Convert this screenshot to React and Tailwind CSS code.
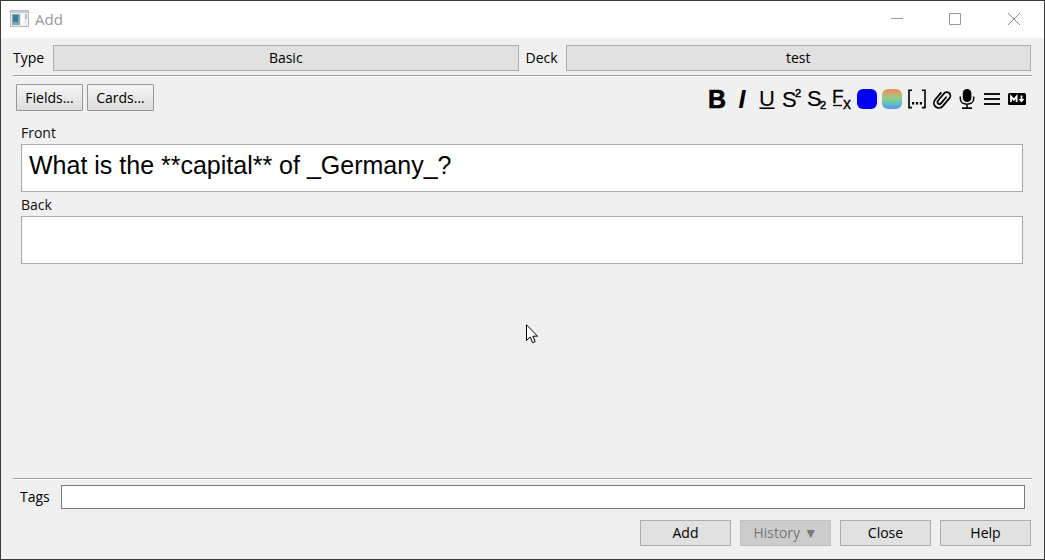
import React from "react";

const ui = 'font-["Open_Sans","Noto_Sans",sans-serif]';
const pushButton =
  "h-[26px] border border-[#adadad] bg-[#e1e1e1] text-center text-sm leading-5 tracking-normal text-black";
const editorButton =
  "h-[27px] w-[67px] rounded-[1px] border border-[#979797] bg-linear-to-b from-[#f5f5f5] to-[#dedede] text-sm leading-5 text-black";

function Tool({ label, children }) {
  return (
    <button type="button" aria-label={label} title={label} className="size-5 flex-none">
      <svg viewBox="0 0 20 20" className="block size-5 overflow-visible" aria-hidden="true">
        {children}
      </svg>
    </button>
  );
}

function Glyph({ className, ...props }) {
  return <text fill="#000" className={`font-["Liberation_Sans",sans-serif] ${className}`} {...props} />;
}

function Toolbar() {
  return (
    <div className="flex items-center gap-[5px] pt-0.5">
      <Tool label="Bold">
        <Glyph x="10" y="19" textAnchor="middle" stroke="#000" strokeWidth="0.6" className="text-[25px] font-bold">B</Glyph>
      </Tool>
      <Tool label="Italic">
        <Glyph x="10" y="19" textAnchor="middle" className="text-[25px] font-bold italic">I</Glyph>
      </Tool>
      <Tool label="Underline">
        <Glyph x="10" y="17" textAnchor="middle" className="text-[22px]">U</Glyph>
        <path d="M2.5 19.2h15" stroke="#000" strokeWidth="1.6" />
      </Tool>
      <Tool label="Superscript">
        <Glyph x="0" y="18" stroke="#000" strokeWidth="0.2" className="text-[22px]">S</Glyph>
        <Glyph x="13" y="8" stroke="#000" strokeWidth="0.5" className="text-[11px]">2</Glyph>
      </Tool>
      <Tool label="Subscript">
        <Glyph x="0" y="17" stroke="#000" strokeWidth="0.2" className="text-[22px]">S</Glyph>
        <Glyph x="13" y="20" stroke="#000" strokeWidth="0.5" className="text-[11px]">2</Glyph>
      </Tool>
      <Tool label="Remove formatting">
        <Glyph x="0" y="14" stroke="#000" strokeWidth="0.3" className="text-[19px]">F</Glyph>
        <path d="M1 16.500h9" stroke="#000" strokeWidth="1.3" />
        <Glyph x="11" y="20" stroke="#000" strokeWidth="0.3" className="text-[16px]">x</Glyph>
      </Tool>
      <button type="button" aria-label="Text colour" className="size-5 flex-none rounded-md bg-[#0000f5]" />
      <button
        type="button"
        aria-label="Change colour"
        className="size-5 flex-none rounded-md bg-linear-to-b from-[#e09562] from-10% via-[#80d38a] via-50% to-[#5b95ee]"
      />
      <Tool label="Cloze deletion">
        <path d="M5 1.2H2v17.4h3M15 1.2h3v17.4h-3" fill="none" stroke="#000" strokeWidth="1.6" />
        <path d="M5 13h2.200v2.600H5zM8.900 13h2.200v2.600H8.900zM12.800 13H15v2.600h-2.200z" />
      </Tool>
      <Tool label="Attach file">
        <path
          d="M12 6v8a2 2 0 0 1-4 0V4.500a3.600 3.600 0 0 1 7.200 0V15a5 5 0 0 1-10 0V6"
          transform="rotate(40 10 10)"
          fill="none"
          stroke="#000"
          strokeWidth="1.800"
          strokeLinecap="round"
        />
      </Tool>
      <Tool label="Record audio">
        <rect x="5.800" y="0" width="8.600" height="13" rx="4.300" />
        <path d="M3.300 7.500v2.300c0 7.200 13.400 7.200 13.400 0V7.500M10 15v4" fill="none" stroke="#000" strokeWidth="1.500" />
        <path d="M5 18.300h10v1.700H5z" />
      </Tool>
      <Tool label="More options">
        <path d="M2 5h16M2 10h16M2 15h16" stroke="#1c1414" strokeWidth="1.900" />
      </Tool>
      <Tool label="Markdown">
        <rect x="1" y="4" width="18" height="12" rx="1.500" />
        <path d="M4 13V7.500l2.800 3.300 2.800-3.300V13" fill="none" stroke="#fff" strokeWidth="1.800" />
        <path d="M14.500 6.500v4.500" stroke="#fff" strokeWidth="1.800" />
        <path d="M11.500 10h6l-3 3.500z" fill="#fff" />
      </Tool>
    </div>
  );
}

function Field({ id, label, value }) {
  return (
    <div className="flex flex-col">
      <label htmlFor={id} className="h-6 pt-[3px] text-sm leading-5 text-[#111]">{label}</label>
      <input
        id={id}
        type="text"
        defaultValue={value}
        className='h-12 w-full border border-[#a9a9a9] bg-white px-[7px] pb-1.5 font-["Liberation_Sans",Arial,sans-serif] text-[25px] text-black outline-none'
      />
    </div>
  );
}

function TitleBar() {
  return (
    <header className="flex h-[37px] items-center bg-white pb-0.5 pl-[9px] text-[#999]">
      <svg viewBox="0 0 20 18" className="h-[18px] w-5" aria-hidden="true">
        <rect x="0.500" y="0.500" width="18" height="16" fill="#eee" stroke="#b9b9b9" />
        <path d="M1 2h17" stroke="#c9cdcd" strokeWidth="2" />
        <rect x="2" y="4" width="8" height="11" fill="#79a9bd" />
        <rect x="3" y="5" width="5" height="7" fill="#397e95" />
        <rect x="11" y="4" width="3" height="11" fill="#fafafa" />
        <rect x="15" y="4" width="2" height="5" fill="#a9bfd2" />
      </svg>
      <h1 className="ml-[5px] text-[15px] leading-5">Add</h1>
      <div className="ml-auto flex">
        <button type="button" aria-label="Minimize" className="flex h-8 w-[58px] items-center justify-center">
          <svg viewBox="0 0 12 12" className="size-3"><path d="M0 5.500h12" stroke="#999" /></svg>
        </button>
        <button type="button" aria-label="Maximize" className="flex h-8 w-[58px] items-center justify-center">
          <svg viewBox="0 0 12 12" className="size-3"><path d="M.5.500h11v11H.500z" fill="none" stroke="#999" /></svg>
        </button>
        <button type="button" aria-label="Close window" className="flex h-8 w-[60px] items-center justify-center">
          <svg viewBox="0 0 12 12" className="size-3"><path d="M0 0l12 12M12 0L0 12" stroke="#888" /></svg>
        </button>
      </div>
    </header>
  );
}

export default function App() {
  return (
    <div className={`relative flex min-h-screen flex-col border border-[#3c3a3a] bg-[#f0f0f0] text-sm text-black ${ui}`}>
      <TitleBar />
      <main className="flex flex-1 flex-col px-3 pt-[7px] pb-[13px]">
        <div className="flex items-center pr-px">
          <label htmlFor="note-type" className="w-10 flex-none">Type</label>
          <button id="note-type" type="button" className={`flex-1 ${pushButton}`}>Basic</button>
          <label htmlFor="deck" className="ml-[7px] w-10 flex-none">Deck</label>
          <button id="deck" type="button" className={`flex-1 ${pushButton}`}>test</button>
        </div>
        <hr className="mt-1 h-0.5 border-t border-b border-t-[#a0a0a0] border-b-white" />

        <section className="flex flex-1 flex-col">
          <div className="flex items-center justify-between pt-[7px] pr-[5px] pl-[3px]">
            <div className="flex gap-1">
              <button type="button" className={editorButton}>Fields...</button>
              <button type="button" className={editorButton}>Cards...</button>
            </div>
            <Toolbar />
          </div>
          <div className="mt-[9px] flex flex-col pr-[9px] pl-2">
            <Field id="front" label="Front" value="What is the **capital** of _Germany_?" />
            <Field id="back" label="Back" value="" />
          </div>
        </section>

        <hr className="h-0.5 border-t border-b border-t-[#a0a0a0] border-b-white" />
        <div className="flex items-center pt-[5px] pr-[7px] pl-[7px]">
          <label htmlFor="tags" className="w-[41px] flex-none">Tags</label>
          <input id="tags" type="text" className="h-6 min-w-0 flex-1 border border-[#7a7a7a] bg-white px-1 outline-none" />
        </div>
        <div className="mt-[11px] flex justify-end gap-[9px] pr-px">
          <button type="button" className={`w-[91px] ${pushButton}`}>Add</button>
          <button type="button" disabled className="h-[26px] w-[91px] border border-[#bfbfbf] bg-[#cccccc] text-sm leading-5 text-[#787878]">
            History ▼
          </button>
          <button type="button" className={`w-[91px] ${pushButton}`}>Close</button>
          <button type="button" className={`w-[91px] ${pushButton}`}>Help</button>
        </div>
      </main>
      <svg viewBox="0 0 12 20" className="pointer-events-none absolute top-[323px] left-[525px] h-5 w-3" aria-hidden="true">
        <path d="M.5.800v15.700l3.700-3.500 2.400 5.700 2.600-1.100-2.400-5.400h4.700z" fill="#fff" stroke="#000" />
      </svg>
    </div>
  );
}
